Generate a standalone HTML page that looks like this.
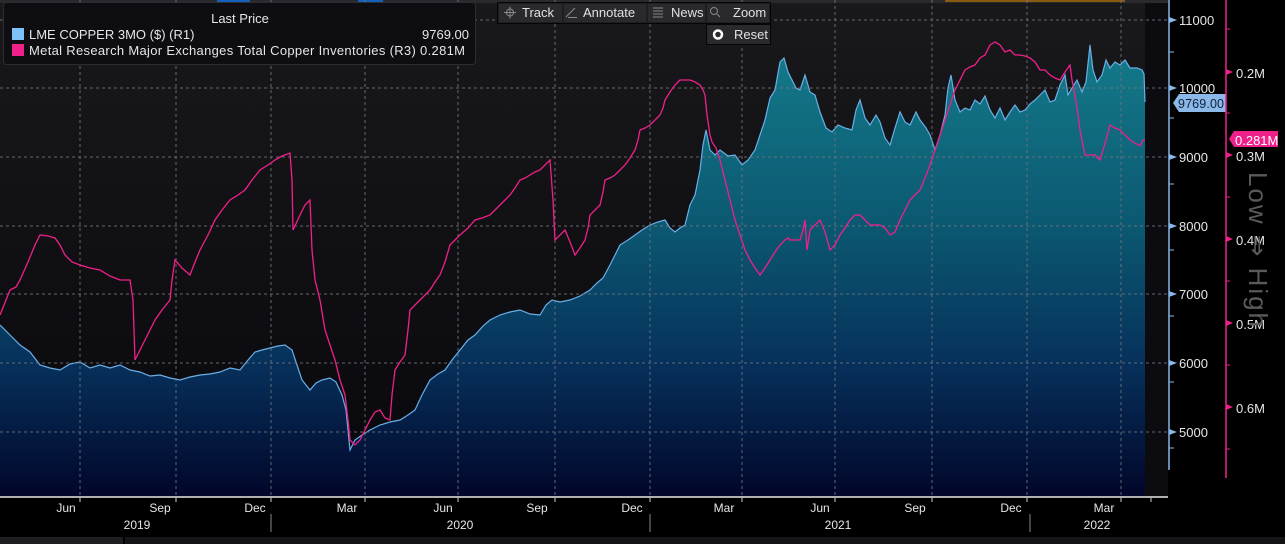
<!DOCTYPE html>
<html><head><meta charset="utf-8"><style>
html,body{margin:0;padding:0;background:#000;width:1285px;height:544px;overflow:hidden;font-family:"Liberation Sans",sans-serif}
svg{display:block}
</style></head><body>
<svg width="1285" height="544" viewBox="0 0 1285 544" xmlns="http://www.w3.org/2000/svg" font-family="Liberation Sans, sans-serif">
<defs>
<linearGradient id="bg" x1="0" y1="0" x2="0" y2="1"><stop offset="0" stop-color="#19191c"/><stop offset="1" stop-color="#08080c"/></linearGradient>
<linearGradient id="fill" gradientUnits="userSpaceOnUse" x1="0" y1="60" x2="0" y2="497"><stop offset="0" stop-color="#137888"/><stop offset="0.4" stop-color="#0b5670"/><stop offset="0.7" stop-color="#06305a"/><stop offset="1" stop-color="#02062a"/></linearGradient>
</defs>
<rect x="0" y="0" width="1285" height="544" fill="#000"/>
<rect x="0" y="0" width="1168" height="497" fill="url(#bg)"/>
<rect x="1145" y="0" width="23" height="497" fill="#0c0c10"/>
<rect x="0" y="0" width="1168" height="3" fill="#2a2a2e"/>
<rect x="217" y="0" width="33" height="3" fill="#1560b8"/>
<rect x="358" y="0" width="25" height="3" fill="#1560b8"/>
<rect x="945" y="0" width="180" height="2" fill="#8a5a10"/>
<path fill="url(#fill)" stroke="none" d="M0,497 L0,325 L10,335 L20,345 L30,352 L40,365 L50,368 L60,370 L70,364 L80,362 L90,368 L100,365 L110,368 L120,365 L130,370 L140,372 L150,376 L160,375 L170,378 L180,380 L190,377 L200,375 L210,374 L220,372 L230,368 L240,370 L248,360 L255,352 L262,350 L270,348 L278,346 L285,345 L292,350 L297,365 L302,380 L310,390 L316,383 L322,380 L330,378 L336,382 L342,395 L346,410 L350,450 L355,440 L362,435 L370,430 L380,425 L390,422 L400,420 L408,415 L415,410 L422,395 L430,380 L438,374 L445,370 L452,360 L460,350 L468,340 L475,335 L483,326 L490,320 L500,315 L510,312 L520,310 L530,314 L540,315 L546,305 L552,300 L560,302 L570,300 L580,296 L590,290 L597,283 L603,278 L610,265 L615,255 L620,245 L628,240 L635,235 L642,230 L650,225 L658,222 L665,220 L670,228 L675,232 L680,228 L685,225 L690,205 L695,195 L700,170 L703,145 L706,130 L710,150 L715,155 L720,150 L728,156 L735,155 L742,165 L748,160 L755,150 L760,135 L765,120 L770,98 L775,90 L780,62 L784,58 L788,72 L792,80 L796,88 L800,90 L805,75 L810,92 L815,95 L820,112 L826,128 L832,132 L838,125 L845,128 L852,130 L856,110 L860,100 L865,118 L870,125 L876,115 L880,122 L885,138 L890,145 L895,128 L900,112 L905,122 L910,125 L916,112 L920,120 L926,128 L930,135 L935,150 L940,135 L945,115 L948,88 L951,75 L955,100 L960,112 L965,108 L970,110 L975,100 L980,104 L985,96 L990,110 L995,118 L1000,108 L1005,120 L1010,112 L1015,105 L1020,112 L1025,110 L1030,104 L1035,100 L1040,95 L1045,90 L1050,102 L1055,100 L1060,85 L1065,75 L1068,95 L1072,88 L1077,80 L1082,92 L1086,82 L1090,45 L1093,70 L1097,82 L1102,75 L1106,60 L1110,68 L1115,62 L1120,65 L1125,60 L1130,68 L1137,68 L1142,70 L1144,74 L1145,102 L1145,497 Z"/>
<polyline fill="none" stroke="#6aaee8" stroke-width="1.2" points="0,325 10,335 20,345 30,352 40,365 50,368 60,370 70,364 80,362 90,368 100,365 110,368 120,365 130,370 140,372 150,376 160,375 170,378 180,380 190,377 200,375 210,374 220,372 230,368 240,370 248,360 255,352 262,350 270,348 278,346 285,345 292,350 297,365 302,380 310,390 316,383 322,380 330,378 336,382 342,395 346,410 350,450 355,440 362,435 370,430 380,425 390,422 400,420 408,415 415,410 422,395 430,380 438,374 445,370 452,360 460,350 468,340 475,335 483,326 490,320 500,315 510,312 520,310 530,314 540,315 546,305 552,300 560,302 570,300 580,296 590,290 597,283 603,278 610,265 615,255 620,245 628,240 635,235 642,230 650,225 658,222 665,220 670,228 675,232 680,228 685,225 690,205 695,195 700,170 703,145 706,130 710,150 715,155 720,150 728,156 735,155 742,165 748,160 755,150 760,135 765,120 770,98 775,90 780,62 784,58 788,72 792,80 796,88 800,90 805,75 810,92 815,95 820,112 826,128 832,132 838,125 845,128 852,130 856,110 860,100 865,118 870,125 876,115 880,122 885,138 890,145 895,128 900,112 905,122 910,125 916,112 920,120 926,128 930,135 935,150 940,135 945,115 948,88 951,75 955,100 960,112 965,108 970,110 975,100 980,104 985,96 990,110 995,118 1000,108 1005,120 1010,112 1015,105 1020,112 1025,110 1030,104 1035,100 1040,95 1045,90 1050,102 1055,100 1060,85 1065,75 1068,95 1072,88 1077,80 1082,92 1086,82 1090,45 1093,70 1097,82 1102,75 1106,60 1110,68 1115,62 1120,65 1125,60 1130,68 1137,68 1142,70 1144,74 1145,102"/>
<g stroke="#74747c" stroke-width="1" stroke-dasharray="3,3" opacity="0.85">
<line x1="0" y1="20" x2="1168" y2="20"/><line x1="0" y1="88" x2="1168" y2="88"/><line x1="0" y1="157" x2="1168" y2="157"/><line x1="0" y1="226" x2="1168" y2="226"/><line x1="0" y1="294" x2="1168" y2="294"/><line x1="0" y1="363" x2="1168" y2="363"/><line x1="0" y1="432" x2="1168" y2="432"/>
<line x1="80" y1="0" x2="80" y2="497"/><line x1="176" y1="0" x2="176" y2="497"/><line x1="271" y1="0" x2="271" y2="497"/><line x1="365" y1="0" x2="365" y2="497"/><line x1="458" y1="0" x2="458" y2="497"/><line x1="555" y1="0" x2="555" y2="497"/><line x1="650" y1="0" x2="650" y2="497"/><line x1="742" y1="0" x2="742" y2="497"/><line x1="835" y1="0" x2="835" y2="497"/><line x1="932" y1="0" x2="932" y2="497"/><line x1="1027" y1="0" x2="1027" y2="497"/><line x1="1121" y1="0" x2="1121" y2="497"/>
</g>
<polyline fill="none" stroke="#f0208a" stroke-width="1.3" points="0,315 6,300 10,290 16,287 20,280 28,262 35,245 40,235 48,236 55,238 60,245 65,255 72,262 80,265 90,268 100,270 110,276 120,280 130,280 133,300 135,360 140,350 145,340 150,330 155,320 162,310 170,300 172,280 175,260 182,268 190,275 195,262 200,250 208,235 215,220 222,210 230,200 238,195 245,190 252,180 260,170 268,165 275,160 282,156 290,153 292,180 293,230 300,215 305,205 310,200 312,250 315,280 320,300 325,330 330,345 335,360 340,380 345,395 348,420 350,440 355,445 360,440 365,430 370,420 375,412 380,410 385,418 390,420 392,395 395,370 400,362 405,355 408,330 410,310 415,305 420,300 425,295 430,290 435,282 440,275 445,262 450,245 455,240 460,235 468,228 475,220 482,218 490,215 495,210 500,205 505,200 510,195 515,188 520,180 525,178 530,175 535,172 540,170 545,165 550,160 553,200 555,240 560,235 565,230 570,242 575,255 580,248 585,240 588,228 590,215 595,210 600,205 603,192 605,180 610,178 615,175 620,170 625,165 630,158 635,150 638,140 640,130 645,128 650,125 655,120 660,115 663,108 665,100 670,92 675,85 678,82 680,80 685,80 690,80 695,82 700,85 703,90 705,95 707,115 710,135 712,142 716,148 720,160 725,180 730,200 735,220 740,235 745,250 750,260 755,268 760,275 765,268 770,260 775,252 780,245 785,240 788,238 790,240 795,240 800,240 803,230 805,220 807,250 810,230 815,225 820,220 825,232 830,250 835,245 840,235 845,228 850,220 855,215 860,215 865,220 870,225 875,225 880,225 885,228 890,235 895,232 900,220 905,210 910,200 915,195 920,190 925,178 930,165 935,150 940,135 945,120 950,105 955,90 960,80 965,70 970,67 975,65 980,58 985,55 990,45 995,42 1000,45 1005,52 1010,50 1015,55 1020,55 1025,56 1030,58 1035,62 1040,70 1045,70 1050,75 1055,78 1060,80 1065,72 1070,65 1072,80 1075,95 1078,115 1080,130 1085,155 1090,155 1095,155 1100,160 1103,150 1106,140 1110,125 1115,128 1120,130 1125,135 1130,140 1135,143 1140,146 1143,140 1145,140"/>
<line x1="0" y1="497" x2="1168" y2="497" stroke="#e8e8e8" stroke-width="1.5"/>
<g stroke="#ccc" stroke-width="1">
<line x1="80" y1="497" x2="80" y2="502"/><line x1="176" y1="497" x2="176" y2="502"/><line x1="271" y1="497" x2="271" y2="502"/><line x1="365" y1="497" x2="365" y2="502"/><line x1="458" y1="497" x2="458" y2="502"/><line x1="555" y1="497" x2="555" y2="502"/><line x1="650" y1="497" x2="650" y2="502"/><line x1="742" y1="497" x2="742" y2="502"/><line x1="835" y1="497" x2="835" y2="502"/><line x1="932" y1="497" x2="932" y2="502"/><line x1="1027" y1="497" x2="1027" y2="502"/><line x1="1121" y1="497" x2="1121" y2="502"/><line x1="1151" y1="497" x2="1151" y2="502"/>
<line x1="271" y1="514" x2="271" y2="532" stroke="#888"/><line x1="650" y1="514" x2="650" y2="532" stroke="#888"/><line x1="1030" y1="514" x2="1030" y2="532" stroke="#888"/>
</g>
<g fill="#e6e6e6" font-size="12" text-anchor="middle">
<text x="66" y="512">Jun</text><text x="160" y="512">Sep</text><text x="255" y="512">Dec</text><text x="347" y="512">Mar</text><text x="443" y="512">Jun</text><text x="537" y="512">Sep</text><text x="632" y="512">Dec</text><text x="724" y="512">Mar</text><text x="820" y="512">Jun</text><text x="915" y="512">Sep</text><text x="1011" y="512">Dec</text><text x="1104" y="512">Mar</text>
<text x="137" y="529">2019</text><text x="460" y="529">2020</text><text x="838" y="529">2021</text><text x="1097" y="529">2022</text>
</g>
<rect x="0" y="537" width="123" height="7" fill="#1e1e22"/><rect x="125" y="537" width="1160" height="7" fill="#141418"/>
<line x1="1169" y1="0" x2="1169" y2="470" stroke="#8ab8e8" stroke-width="1.5"/>
<g fill="#8ab8e8"><path d="M1169,17 l8,3 l-8,3z"/><path d="M1169,85 l8,3 l-8,3z"/><path d="M1169,154 l8,3 l-8,3z"/><path d="M1169,223 l8,3 l-8,3z"/><path d="M1169,291 l8,3 l-8,3z"/><path d="M1169,360 l8,3 l-8,3z"/><path d="M1169,429 l8,3 l-8,3z"/></g>
<g stroke="#8ab8e8"><line x1="1169" y1="52" x2="1174" y2="52"/><line x1="1169" y1="118" x2="1174" y2="118"/><line x1="1169" y1="184" x2="1174" y2="184"/><line x1="1169" y1="250" x2="1174" y2="250"/><line x1="1169" y1="316" x2="1174" y2="316"/><line x1="1169" y1="382" x2="1174" y2="382"/><line x1="1169" y1="448" x2="1174" y2="448"/></g>
<g fill="#e6e6e6" font-size="13"><text x="1179" y="25">11000</text><text x="1179" y="93">10000</text><text x="1179" y="162">9000</text><text x="1179" y="231">8000</text><text x="1179" y="299">7000</text><text x="1179" y="368">6000</text><text x="1179" y="437">5000</text></g>
<path d="M1173,103 l6,-9 h47 v18 h-47z" fill="#8ab8e8"/>
<text x="1178" y="108" font-size="12.5" fill="#10203a" textLength="46">9769.00</text>
<line x1="1226" y1="0" x2="1226" y2="478" stroke="#f0208a" stroke-width="1.5"/>
<g fill="#f0208a"><path d="M1226,69 l7,3 l-7,3z"/><path d="M1226,152 l7,3 l-7,3z"/><path d="M1226,236 l7,3 l-7,3z"/><path d="M1226,320 l7,3 l-7,3z"/><path d="M1226,404 l7,3 l-7,3z"/></g>
<g stroke="#f0208a"><line x1="1226" y1="29" x2="1230" y2="29"/><line x1="1226" y1="113" x2="1230" y2="113"/><line x1="1226" y1="197" x2="1230" y2="197"/><line x1="1226" y1="281" x2="1230" y2="281"/><line x1="1226" y1="365" x2="1230" y2="365"/><line x1="1226" y1="449" x2="1230" y2="449"/></g>
<g fill="#e6e6e6" font-size="13"><text x="1236" y="78">0.2M</text><text x="1236" y="161">0.3M</text><text x="1236" y="245">0.4M</text><text x="1236" y="329">0.5M</text><text x="1236" y="413">0.6M</text></g>
<path d="M1229,139 l5,-8 h44 v16 h-44z" fill="#f0208a"/>
<text x="1235" y="145" font-size="13" fill="#fff">0.281M</text>
<text transform="translate(1249,172) rotate(90)" font-size="26" fill="#5a5a5a" textLength="155">Low ⇒ High</text>
<rect x="3.5" y="2.5" width="472" height="62" rx="3" fill="#0d0d12" stroke="#2c2c32"/>
<text x="240" y="23" font-size="13" fill="#e6e6e6" text-anchor="middle">Last Price</text>
<rect x="12" y="28" width="12" height="12" fill="#7ec0f8"/>
<rect x="12" y="44" width="12" height="12" fill="#f0208a"/>
<g font-size="13" fill="#e6e6e6">
<text x="29" y="39">LME COPPER 3MO ($)  (R1)</text>
<text x="469" y="39" text-anchor="end">9769.00</text>
<text x="29" y="55" textLength="436">Metal Research Major Exchanges Total Copper Inventories  (R3) 0.281M</text>
</g>
<rect x="497.5" y="2.5" width="273" height="21" fill="#1e1e22" stroke="#050505"/>
<g fill="#2a2a2e"><rect x="499" y="4" width="63" height="18"/><rect x="564" y="4" width="82" height="18"/><rect x="648" y="4" width="57" height="18"/><rect x="707" y="4" width="62" height="18"/></g>
<g stroke="#888" fill="none" stroke-width="1"><circle cx="510" cy="12.5" r="3.5"/><line x1="504" y1="12.5" x2="516" y2="12.5"/><line x1="510" y1="6.5" x2="510" y2="18.5"/><line x1="566" y1="17" x2="575" y2="8"/><line x1="568" y1="17.5" x2="577" y2="17.5"/><line x1="653" y1="8" x2="663" y2="8"/><line x1="653" y1="11" x2="663" y2="11"/><line x1="653" y1="14" x2="663" y2="14"/><line x1="653" y1="17" x2="663" y2="17"/><circle cx="714" cy="11" r="3.5"/><line x1="717" y1="14" x2="720" y2="17"/></g>
<g font-size="13" fill="#e0e0e0"><text x="522" y="17">Track</text><text x="583" y="17">Annotate</text><text x="671" y="17">News</text><text x="733" y="17">Zoom</text></g>
<rect x="706.5" y="24.5" width="64" height="20" fill="#2a2a2e" stroke="#050505"/>
<circle cx="718" cy="34.5" r="4" fill="none" stroke="#fff" stroke-width="2.5"/>
<text x="734" y="39" font-size="13" fill="#e0e0e0">Reset</text>
</svg>
</body></html>
